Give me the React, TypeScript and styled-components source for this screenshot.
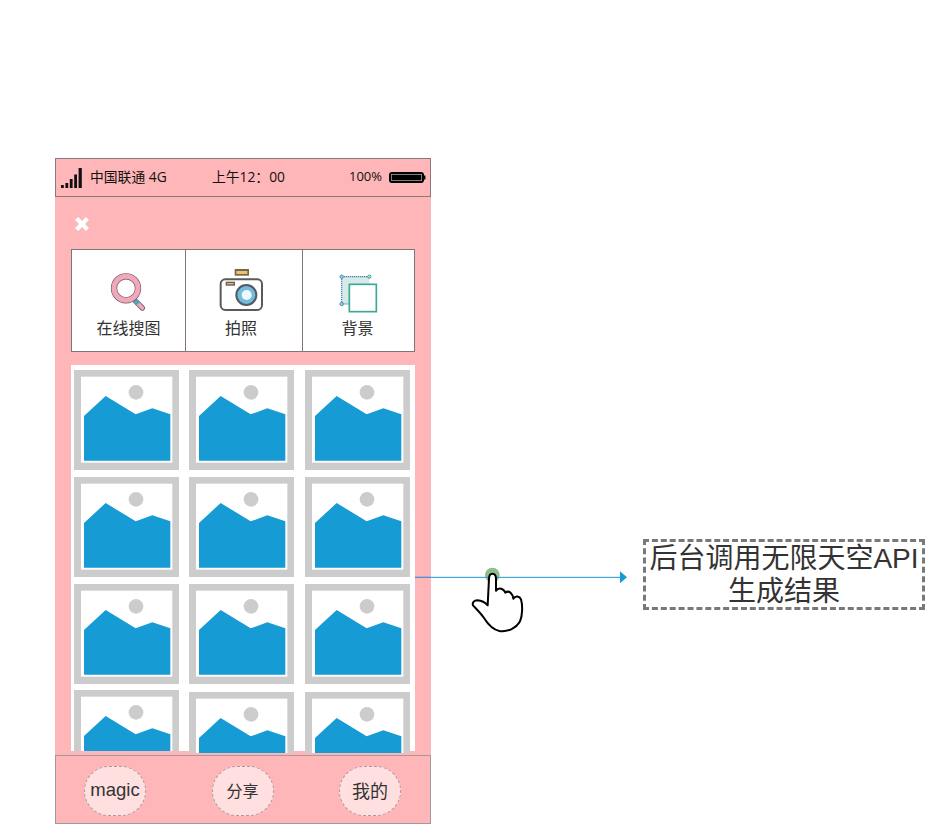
import React from "react";
import styled, { createGlobalStyle } from "styled-components";

const Global = createGlobalStyle`
  html, body { margin: 0; padding: 0; background: #fff; }
  body { font-family: "Open Sans", "Noto Sans CJK SC", sans-serif; }
`;

const Canvas = styled.div`
  position: relative;
  display: flex;
  align-items: flex-start;
  width: 925px;
  height: 824px;
  padding: 158px 0 0 55px;
  box-sizing: border-box;
  overflow: hidden;
`;

const Phone = styled.div`
  flex: none;
  display: flex;
  flex-direction: column;
  width: 376px;
  height: 666px;
  background: #ffb6b8;
`;

const StatusBar = styled.div`
  display: grid;
  grid-template-columns: 34px 122px 137px 40px 1fr;
  align-items: center;
  height: 39px;
  box-sizing: border-box;
  border: 1px solid #8a7a7c;
  color: #111;
  white-space: nowrap;
`;

const StatusText = styled.span<{ $size: number }>`
  padding-bottom: 3px;
  font-size: ${(p) => p.$size}px;
`;

const SignalIcon = styled.svg`
  display: block;
  margin-left: 4px;
`;

const Battery = styled.svg`
  display: block;
  margin-bottom: 1px;
`;

const CloseRow = styled.div`
  display: flex;
  align-items: center;
  height: 52px;
  padding: 2px 0 0 19px;
  box-sizing: border-box;
`;

const Tabs = styled.div`
  display: grid;
  grid-template-columns: 113px 117px 1fr;
  width: 344px;
  height: 103px;
  margin-left: 16px;
  box-sizing: border-box;
  border: 1px solid #7f7577;
  background: #fff;
`;

const Tab = styled.div<{ $divided?: boolean }>`
  display: flex;
  flex-direction: column;
  align-items: center;
  padding: 20px 0 12px;
  box-sizing: border-box;
  border-left: ${(p) => (p.$divided ? "1px solid #7f7577" : "none")};
`;

const TabIcon = styled.svg<{ $raise?: number; $left?: number }>`
  display: block;
  flex: none;
  margin-top: ${(p) => -(p.$raise ?? 0)}px;
  margin-right: ${(p) => p.$left ?? 0}px;
`;

const TabLabel = styled.span<{ $left?: number }>`
  margin-top: auto;
  margin-right: ${(p) => p.$left ?? 0}px;
  font-size: 16px;
  line-height: 22px;
  color: #333;
`;

const Pane = styled.div`
  display: grid;
  grid-template-columns: 115px 116px 105px;
  grid-auto-rows: 100px;
  row-gap: 7px;
  width: 344px;
  height: 386px;
  margin: 13px 0 0 16px;
  padding: 5px 0 0 3px;
  box-sizing: border-box;
  background: #fff;
`;

const ThumbClip = styled.div<{ $shift?: number; $cut?: boolean }>`
  width: 105px;
  height: ${(p) => (p.$cut ? "61px" : "100px")};
  margin-top: ${(p) => p.$shift ?? 0}px;
  overflow: hidden;
`;

const ThumbArt = styled.svg`
  display: block;
`;

const Footer = styled.div`
  display: flex;
  justify-content: space-between;
  align-items: center;
  height: 69px;
  margin-top: 4px;
  padding: 3px 29px 0 28px;
  box-sizing: border-box;
  border: 1px solid #a59a9b;
`;

const RoundButton = styled.div<{ $size: number; $latin?: boolean }>`
  display: flex;
  align-items: center;
  justify-content: center;
  width: 62px;
  height: 50px;
  padding-bottom: 2px;
  box-sizing: border-box;
  border: 1px dashed #ab9899;
  border-radius: 28px;
  background: #ffdfe0;
  color: #333;
  font-family: ${(p) =>
    p.$latin ? '"Liberation Sans", sans-serif' : '"Open Sans", "Noto Sans CJK SC", sans-serif'};
  font-size: ${(p) => p.$size}px;
`;

const Note = styled.div`
  flex: none;
  width: 282px;
  height: 71px;
  margin: 381px 0 0 212px;
  box-sizing: border-box;
  border: 3px dashed #797979;
  color: #333;
  font-family: "Liberation Sans", "Noto Sans CJK SC", sans-serif;
  font-size: 28px;
  line-height: 33px;
  text-align: center;
  white-space: nowrap;
`;

const Overlay = styled.svg`
  position: absolute;
  left: 410px;
  top: 530px;
  pointer-events: none;
`;

const Thumb = () => (
  <ThumbArt width="105" height="100" viewBox="0 0 315 300">
    <rect width="315" height="300" fill="#cccccc" />
    <rect x="21" y="20" width="274" height="258" fill="#fff" />
    <circle cx="186" cy="67" r="22" fill="#cccccc" />
    <polygon points="30,138 95,78 185,133 235,115 289,133 289,272 30,272" fill="#169bd5" />
  </ThumbArt>
);

const rows = [0, 1, 2];

export default function App() {
  return (
    <Canvas>
      <Global />
      <Phone>
        <StatusBar>
          <SignalIcon width="23" height="20" viewBox="0 0 23 20">
            <rect x="1" y="17" width="2.8" height="3" fill="#111" />
            <rect x="5.4" y="15" width="2.8" height="5" fill="#111" />
            <rect x="9.8" y="11" width="2.8" height="9" fill="#111" />
            <rect x="14.2" y="6.5" width="2.8" height="13.5" fill="#111" />
            <rect x="18.6" y="0" width="3.2" height="20" fill="#111" />
          </SignalIcon>
          <StatusText $size={13.8}>中国联通 4G</StatusText>
          <StatusText $size={13.8}>上午12：00</StatusText>
          <StatusText $size={13}>100%</StatusText>
          <Battery width="37" height="11" viewBox="0 0 37 11">
            <rect x="1" y="1" width="33" height="9" rx="2" fill="#fff" stroke="#000" strokeWidth="2" />
            <rect x="2.5" y="2.5" width="30" height="6" fill="#000" />
            <rect x="34.8" y="3.5" width="1.6" height="4" fill="#000" />
          </Battery>
        </StatusBar>
        <CloseRow>
          <svg width="16" height="16" viewBox="0 0 16 16">
            <path d="M2.6 2.6 L13.4 13.4 M13.4 2.6 L2.6 13.4" stroke="#fff" strokeWidth="4.2" />
          </svg>
        </CloseRow>
        <Tabs>
          <Tab>
            <TabIcon width="44" height="44" viewBox="0 0 132 132">
              <path d="M84 92 L106 114" stroke="#5f6a70" strokeWidth="16" strokeLinecap="round" />
              <path d="M84 92 L106 114" stroke="#f4a9bb" strokeWidth="11" strokeLinecap="round" />
              <path d="M80 87 L94 101" stroke="#4fa5b5" strokeWidth="12" />
              <circle cx="57" cy="55" r="36" fill="#fff" stroke="#6a5a5e" strokeWidth="19" />
              <circle cx="57" cy="55" r="36" fill="none" stroke="#f2a7ba" strokeWidth="15" />
            </TabIcon>
            <TabLabel>在线搜图</TabLabel>
          </Tab>
          <Tab $divided>
            <TabIcon width="46" height="44" viewBox="0 0 138 132" $raise={2} $left={4}>
              <rect x="47" y="3" width="43" height="20" fill="#77664f" />
              <rect x="52" y="9" width="33" height="9" fill="#e9c469" />
              <rect x="5" y="34" width="124" height="92" rx="14" fill="#fff" stroke="#5a5a5a" strokeWidth="6" />
              <rect x="20" y="41" width="28" height="12" fill="#6a5c50" />
              <rect x="24" y="45" width="20" height="4" fill="#d9b780" />
              <circle cx="82" cy="81" r="30" fill="#74bcdc" stroke="#505a60" strokeWidth="6" />
              <circle cx="83" cy="81" r="15" fill="#eef8fc" />
            </TabIcon>
            <TabLabel $left={6}>拍照</TabLabel>
          </Tab>
          <Tab $divided>
            <TabIcon width="42" height="44" viewBox="0 0 126 132" $left={1}>
              <rect x="14" y="20" width="83" height="82" fill="#d6eae8" />
              <path d="M14 20 H97 M14 20 V102 H37" fill="none" stroke="#3f85ac" strokeWidth="3.5" strokeDasharray="4 2" />
              <circle cx="14" cy="20" r="5" fill="#a9d3e6" stroke="#3f85ac" strokeWidth="3" />
              <circle cx="97" cy="20" r="5" fill="#b5e3d1" stroke="#3fa58a" strokeWidth="3" />
              <circle cx="14" cy="102" r="5" fill="#a9d3e6" stroke="#3f85ac" strokeWidth="3" />
              <rect x="37" y="43" width="81" height="82" fill="#fff" stroke="#3ba796" strokeWidth="5" />
            </TabIcon>
            <TabLabel $left={2}>背景</TabLabel>
          </Tab>
        </Tabs>
        <Pane>
          {rows.map((r) =>
            rows.map((c) => (
              <ThumbClip key={`${r}-${c}`}>
                <Thumb />
              </ThumbClip>
            ))
          )}
          <ThumbClip $cut $shift={-1}>
            <Thumb />
          </ThumbClip>
          <ThumbClip $cut $shift={1}>
            <Thumb />
          </ThumbClip>
          <ThumbClip $cut $shift={1}>
            <Thumb />
          </ThumbClip>
        </Pane>
        <Footer>
          <RoundButton $size={18.5} $latin>magic</RoundButton>
          <RoundButton $size={16}>分享</RoundButton>
          <RoundButton $size={18}>我的</RoundButton>
        </Footer>
      </Phone>
      <Note>
        后台调用无限天空API
        <br />
        生成结果
      </Note>
      <Overlay width="220" height="110" viewBox="0 0 660 330">
        <circle cx="247" cy="135" r="22" fill="#8ebc8a" />
        <path d="M15 142 H630" stroke="#1d96d8" strokeWidth="3" />
        <path d="M15 142 H62" stroke="#5a8fd6" strokeWidth="3" />
        <polygon points="651,142 630,124 630,160" fill="#169bd5" />
        <path
          d="M247 131 C240 131 237 138 237 146 L233 226 C226 218 214 212 202 211 C192 211 186 218 189 226 C200 238 212 250 222 264 C232 280 246 298 268 303 C292 306 318 296 330 274 C338 256 338 226 333 208 C329 198 316 196 310 206 C308 192 298 179 286 188 C282 176 266 170 258 182 L258 146 C258 137 254 131 247 131 Z"
          fill="#fff"
          stroke="#000"
          strokeWidth="6"
          strokeLinejoin="round"
        />
      </Overlay>
    </Canvas>
  );
}
